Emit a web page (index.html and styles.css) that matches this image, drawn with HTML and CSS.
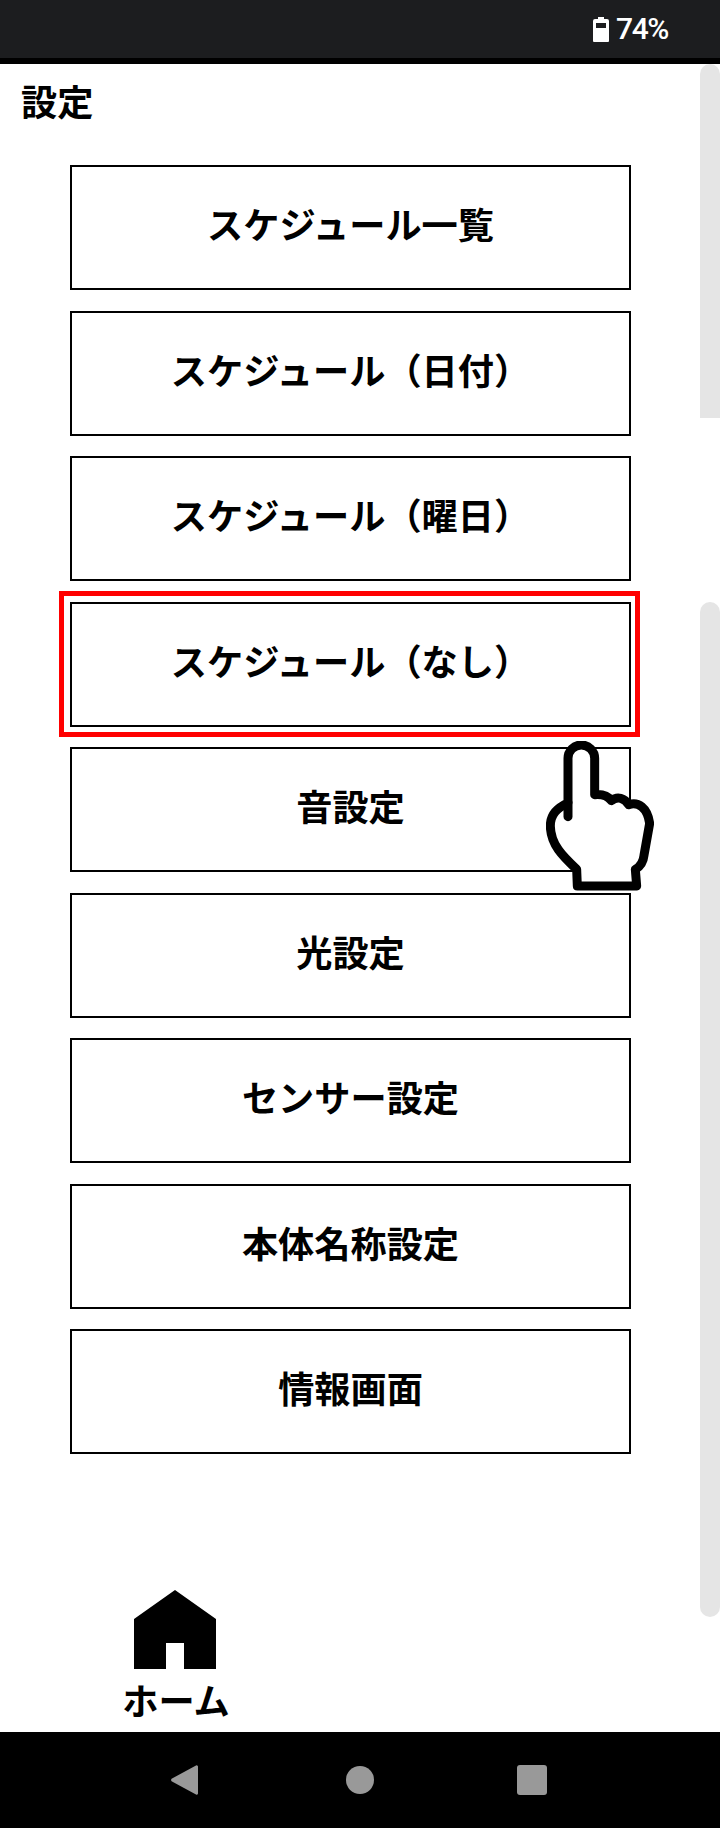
FILE: index.html
```html
<!DOCTYPE html>
<html lang="ja">
<head>
  <meta charset="UTF-8">
  <title>設定</title>
  <link rel="stylesheet" href="styles.css">
</head>
<body>
  <div class="status-bar">
    <svg class="battery" viewBox="0 0 16 25">
      <path d="M5 0h6v2h3a2 2 0 0 1 2 2v20a1 1 0 0 1-1 1H1a1 1 0 0 1-1-1V4a2 2 0 0 1 2-2h3z" fill="#fff"/>
      <rect x="3" y="6" width="10" height="5" fill="#1c1d1f"/>
    </svg>
    <span class="battery-level">74%</span>
  </div>

  <div class="screen">
    <div class="content">
      <h1 class="title">設定</h1>

      <div class="menu">
        <div class="menu-item">スケジュール一覧</div>
        <div class="menu-item">スケジュール（日付）</div>
        <div class="menu-item">スケジュール（曜日）</div>
        <div class="menu-item selected">スケジュール（なし）</div>
        <div class="menu-item">音設定</div>
        <div class="menu-item">光設定</div>
        <div class="menu-item">センサー設定</div>
        <div class="menu-item">本体名称設定</div>
        <div class="menu-item">情報画面</div>

        <svg class="hand" viewBox="138 483 324 450">
          <path class="hand-line" d="M204 668V535a40 40 0 0 1 80 0V644C305 642 324 648 334 662C352 648 374 654 386 674C414 664 442 682 449 730L432 826C430 846 420 860 406 868L410 918H232L230 868C190 830 152 795 151 738C151 702 172 684 204 668Z"/>
          <path class="hand-line" d="M204 668V710"/>
        </svg>
      </div>

      <div class="home">
        <svg class="home-icon" viewBox="0 0 82 79">
          <path d="M41 0L82 29V79H50V53H32V79H0V29Z" fill="#000"/>
        </svg>
        <span class="home-label">ホーム</span>
      </div>
    </div>

    <div class="scrollbar">
      <div class="thumb thumb-top"></div>
      <div class="thumb thumb-main"></div>
    </div>
  </div>

  <div class="nav-bar">
    <svg class="nav-back" viewBox="0 0 28 32">
      <path d="M26 1.500L2 14.500a1.700 1.700 0 0 0 0 3L26 30.500a1.300 1.300 0 0 0 2-1V2.500a1.300 1.300 0 0 0-2-1z" fill="#999"/>
    </svg>
    <div class="nav-home"></div>
    <div class="nav-recent"></div>
  </div>
</body>
</html>
```

FILE: styles.css
```css
* {
  box-sizing: border-box;
}

body {
  margin: 0;
  height: 1828px;
  display: flex;
  flex-direction: column;
  background: #fff;
  color: #000;
  font-family: "Noto Sans CJK JP", "Noto Sans", sans-serif;
  overflow: hidden;
}

.status-bar {
  height: 64px;
  background: #1c1d1f;
  border-bottom: 6px solid #000;
  display: flex;
  align-items: center;
  justify-content: flex-end;
  padding-right: 52px;
  gap: 7px;
}

.battery {
  width: 16px;
  height: 25px;
}

.battery-level {
  font-family: Roboto, sans-serif;
  font-weight: 500;
  font-size: 30px;
  letter-spacing: -1.4px;
  line-height: 58px;
  color: #fff;
}

.screen {
  flex: 1;
  display: flex;
  min-height: 0;
}

.content {
  flex: 1;
  display: flex;
  flex-direction: column;
}

.title {
  margin: 0;
  padding: 10px 0 0 21px;
  height: 101px;
  font-size: 36.2px;
  line-height: 52px;
  font-weight: 700;
}

.menu {
  position: relative;
  margin-left: 70px;
  width: 561px;
  display: flex;
  flex-direction: column;
  gap: 20.5px;
}

.menu-item {
  position: relative;
  height: 125px;
  border: 2px solid #000;
  display: flex;
  align-items: center;
  justify-content: center;
  padding-bottom: 9px;
  font-size: 36.2px;
  font-weight: 700;
}

.menu-item.selected::after {
  content: "";
  position: absolute;
  top: -13px;
  left: -13px;
  right: -11px;
  bottom: -12px;
  border: 5px solid #f00;
}

.hand {
  position: absolute;
  left: 476px;
  top: 576px;
  width: 108px;
  height: 150px;
}

.hand-line {
  fill: #fff;
  stroke: #000;
  stroke-width: 27;
  stroke-linecap: round;
  stroke-linejoin: round;
}

.home {
  margin: auto 0 0 107px;
  width: 136px;
  height: 142px;
  display: flex;
  flex-direction: column;
  align-items: center;
}

.home-icon {
  width: 82px;
  height: 79px;
  flex: none;
}

.home-label {
  font-size: 36.2px;
  font-weight: 700;
  line-height: 52px;
  margin: 4px 0 0 2px;
}

.scrollbar {
  width: 20px;
  display: flex;
  flex-direction: column;
  justify-content: space-between;
  padding-bottom: 115px;
}

.thumb {
  background: #e5e5e5;
}

.thumb-top {
  height: 354px;
  border-radius: 10px 10px 0 0;
}

.thumb-main {
  height: 1015px;
  border-radius: 10px;
}

.nav-bar {
  position: relative;
  height: 96px;
  flex: none;
  background: #000;
  display: flex;
  align-items: center;
  padding-left: 170px;
}

.nav-back {
  width: 28px;
  height: 32px;
}

.nav-home {
  width: 28px;
  height: 28px;
  margin-left: 148px;
  border-radius: 50%;
  background: #999;
}

.nav-recent {
  width: 30px;
  height: 30px;
  margin-left: 143px;
  border-radius: 3px;
  background: #999;
}
```
